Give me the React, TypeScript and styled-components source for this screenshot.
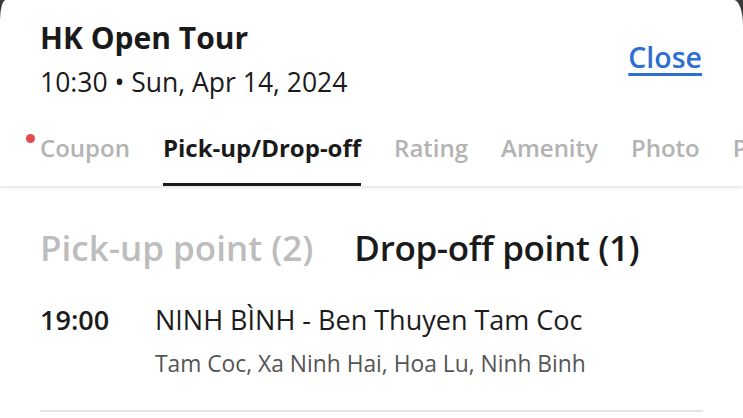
import { styled, createGlobalStyle } from 'styled-components'

const GlobalStyle = createGlobalStyle`
  html, body {
    margin: 0;
    padding: 0;
    background: #3a3a3a;
  }
  body {
    font-family: 'Open Sans', 'Noto Sans', sans-serif;
    color: #1c1c1c;
  }
  * {
    box-sizing: border-box;
  }
`

const tabs = ['Coupon', 'Pick-up/Drop-off', 'Rating', 'Amenity', 'Photo', 'Photos']

export default function App() {
  return (
    <>
      <GlobalStyle />
      <Sheet>
        <Header>
          <TitleRow>
            <div>
              <Title>HK Open Tour</Title>
              <SubTitle>10:30 • Sun, Apr 14, 2024</SubTitle>
            </div>
            <CloseLink>Close</CloseLink>
          </TitleRow>
          <TabBar>
            {tabs.map((t, i) => (
              <Tab key={t} $active={i === 1}>
                {i === 0 && <Dot />}
                {t}
              </Tab>
            ))}
          </TabBar>
        </Header>
        <Body>
          <PointSwitch>
            <PointTab $active={false}>Pick-up point (2)</PointTab>
            <PointTab $active={true}>Drop-off point (1)</PointTab>
          </PointSwitch>
          <StopRow>
            <StopTime>19:00</StopTime>
            <StopInfo>
              <StopName>NINH BÌNH - Ben Thuyen Tam Coc</StopName>
              <StopAddress>Tam Coc, Xa Ninh Hai, Hoa Lu, Ninh Binh</StopAddress>
            </StopInfo>
          </StopRow>
        </Body>
      </Sheet>
    </>
  )
}

const Sheet = styled.div`
  width: 743px;
  height: 418px;
  background: #fff;
  border-top-left-radius: 6px 20px;
  border-top-right-radius: 9px 26px;
  overflow: hidden;
`
const Header = styled.div`
  box-shadow: 0 2px 3px rgba(0, 0, 0, 0.1);
  position: relative;
`
const TitleRow = styled.div`
  display: flex;
  justify-content: space-between;
  align-items: flex-start;
  padding: 19px 41px 0 40px;
`
const Title = styled.h1`
  margin: 0;
  font-size: 30px;
  font-weight: 700;
  line-height: 38px;
  color: #1a1a1a;
`
const SubTitle = styled.div`
  margin-top: 8px;
  font-size: 26.5px;
  line-height: 34px;
  color: #1a1a1a;
`
const CloseLink = styled.a`
  margin-top: 19px;
  font-size: 28.5px;
  font-weight: 600;
  color: #2d6fd2;
  text-decoration: underline;
  text-decoration-thickness: 3px;
  text-underline-offset: 5px;
  cursor: pointer;
`
const TabBar = styled.div`
  display: flex;
  gap: 33px;
  margin-top: 33px;
  padding-left: 40px;
  white-space: nowrap;
  overflow: hidden;
`
const Tab = styled.div<{ $active: boolean }>`
  position: relative;
  flex-shrink: 0;
  padding-bottom: 19px;
  font-size: 24px;
  line-height: 32px;
  font-weight: ${p => (p.$active ? 700 : 600)};
  color: ${p => (p.$active ? '#1a1a1a' : '#b3b3b3')};
  border-bottom: 3px solid ${p => (p.$active ? '#1a1a1a' : 'transparent')};
`
const Dot = styled.span`
  position: absolute;
  left: -14px;
  top: 2px;
  width: 9px;
  height: 9px;
  border-radius: 50%;
  background: #e5484d;
`
const Body = styled.div`
  padding: 39px 40px 0;
`
const PointSwitch = styled.div`
  display: flex;
  gap: 41px;
`
const PointTab = styled.div<{ $active: boolean }>`
  font-size: 35px;
  line-height: 46px;
  font-weight: 600;
  letter-spacing: ${p => (p.$active ? '-0.35px' : '0')};
  color: ${p => (p.$active ? '#1a1a1a' : '#bdbdbd')};
`
const StopRow = styled.div`
  display: flex;
  gap: 44px;
  margin-top: 32px;
  padding-bottom: 32px;
  border-bottom: 2px solid #e3e3e3;
`
const StopTime = styled.div`
  width: 71px;
  font-size: 27px;
  line-height: 34px;
  font-weight: 600;
`
const StopInfo = styled.div`
  display: flex;
  flex-direction: column;
  gap: 13px;
`
const StopName = styled.div`
  font-size: 27px;
  line-height: 34px;
  color: #1c1c1c;
`
const StopAddress = styled.div`
  font-size: 22.8px;
  line-height: 28px;
  color: #555;
`
